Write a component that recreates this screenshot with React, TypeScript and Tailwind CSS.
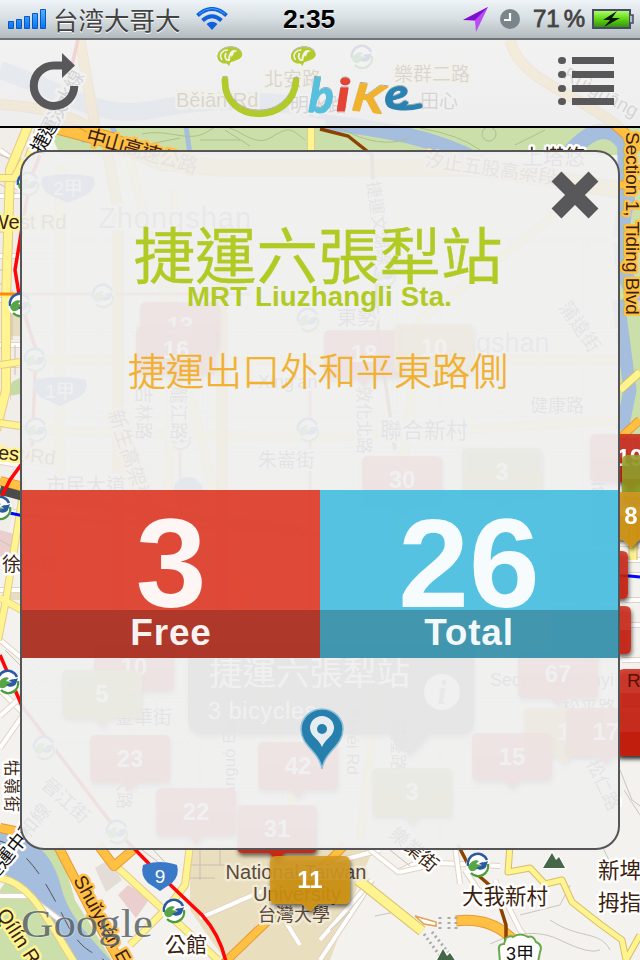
import React from "react";

const SANS = "font-['Liberation_Sans','Noto_Sans_CJK_TC',sans-serif]";

type RoadProps = { d: string; w: number; c: string; edge?: string; ew?: number };

function Road({ d, w, c, edge, ew = 2 }: RoadProps) {
  return (
    <g fill="none" strokeLinejoin="round">
      {edge && <path d={d} stroke={edge} strokeWidth={w + ew} />}
      <path d={d} stroke={c} strokeWidth={w} />
    </g>
  );
}

const minor = "#e2d3c3";
const whiteStreets = [
  "M0 150L22 166", "M0 176L22 190", "M0 196H20", "M10 210V250", "M0 256H60", "M0 300H20", "M8 330V400",
  "M0 345H20", "M0 365H20", "M0 462L60 472", "M0 508L60 525", "M0 640L60 690", "M0 590H40", "M0 690L60 750",
  "M0 716L40 680", "M0 748L30 705", "M200 918L320 866L380 850", "M255 930L275 905L300 945",
  "M320 960L360 900L372 880", "M320 940L372 880", "M370 850L398 872L430 856", "M400 872L440 863L500 866",
  "M455 845L460 884", "M465 870L478 890L495 895", "M495 880L520 930L532 945L532 960", "M560 540L640 545",
  "M620 560H640", "M620 575H640", "M625 600H640", "M625 625H640", "M622 660H640", "M633 440V480", "M0 896L28 896L60 920",
];
const hiddenStreets = [
  "M20 240H620", "M20 330H620", "M100 160V460", "M150 190V640", "M205 210V640", "M250 200V640", "M350 150V840",
  "M395 250V640", "M440 300V840", "M500 300V680", "M540 290V600", "M585 240V600", "M20 415H600", "M20 450H600",
  "M30 700H600", "M60 745H560", "M80 790H520", "M200 640V840", "M280 640V840", "M60 640L220 840", "M110 640L270 840",
];

function Metro({ x, y, r = 11 }: { x: number; y: number; r?: number }) {
  return (
    <g transform={`translate(${x} ${y}) scale(${r / 11})`}>
      <circle r="12" fill="#fff" />
      <path d="M-10 1A10 10 0 0 1 9-5" fill="none" stroke="#2b5aa0" strokeWidth="2.6" />
      <path d="M10-1A10 10 0 0 1-7 8" fill="none" stroke="#4c9b3c" strokeWidth="2.4" />
      <path d="M-10 2C-8-3-3-6 1-4L-2-1 3 0C-1 4-3 6-5 6-8 7-9 4-10 2Z" fill="#58a546" />
      <path d="M10-4C7-2 4-4 1-1L4 0-2 3C1 6 6 5 8 2Z" fill="#2b5aa0" />
    </g>
  );
}

type LabelProps = { x: number; y: number; s?: number; rot?: number; t: string; halo?: string; c?: string; mid?: boolean; ls?: number };

function Label({ x, y, s = 20, rot = 0, t, halo = "#fff", c = "#3c1f10", mid, ls = 0 }: LabelProps) {
  return (
    <text
      transform={`translate(${x} ${y}) rotate(${rot})`}
      fontSize={s}
      fill={c}
      stroke={halo}
      strokeWidth="5"
      strokeLinejoin="round"
      paintOrder="stroke"
      letterSpacing={ls}
      textAnchor={mid ? "middle" : "start"}
    >
      {t}
    </text>
  );
}

const tones = { red: "#c9200f", gold: "#d0920c", green: "#8f991d" };

function Bubble({ x, y, n, tone = "red" }: { x: number; y: number; n: string; tone?: keyof typeof tones }) {
  return (
    <g transform={`translate(${x} ${y})`} filter="url(#drop)">
      <path
        d="M-34-24H34Q40-24 40-18V18Q40 24 34 24H8L0 32L-8 24H-34Q-40 24-40 18V-18Q-40-24-34-24Z"
        fill={tones[tone]}
        fillOpacity="0.86"
      />
      <path d="M-34-24H34Q40-24 40-18V0H-40V-18Q-40-24-34-24Z" fill="#fff" fillOpacity="0.06" />
      <text y="8" textAnchor="middle" fontSize="24" fontWeight="bold" fill="#fff">
        {n}
      </text>
    </g>
  );
}

function Shield({ x, y, t, w = 1 }: { x: number; y: number; t: string; w?: number }) {
  return (
    <g transform={`translate(${x} ${y})`}>
      <path transform={`scale(${w} 1)`} d="M-14-13Q0-17 14-13L17-12Q20-2 12 6L0 14L-12 6Q-20-2-17-12Z" fill="#3a78c8" />
      <text y="6" textAnchor="middle" fontSize="19" fill="#fff">{t}</text>
    </g>
  );
}

function MapCanvas() {
  return (
    <svg className={`absolute inset-0 h-[960px] w-[640px] ${SANS}`} viewBox="0 0 640 960">
      <defs>
        <filter id="drop" x="-20%" y="-20%" width="150%" height="160%">
          <feDropShadow dx="1" dy="3" stdDeviation="2" floodOpacity="0.65" />
        </filter>
      </defs>
      <rect width="640" height="960" fill="#f3f2ee" />
      {/* parks, campus and built-up blocks */}
      <path d="M50 132L120 126H640V155H60Z" fill="#cbdfaa" />
      <path d="M0 126H45L22 200V480L0 560Z" fill="#f1ede8" />
      <path d="M30 845L60 850L75 900L112 960H0V890Z" fill="#cbdfaa" />
      <path d="M190 845H375L360 880L330 960H225L190 910Z" fill="#e9dfbf" />
      <path d="M0 530L18 535L10 560L0 556Z" fill="#ebcfcf" />
      <path d="M95 868L108 860L122 880L106 892Z" fill="#e4dcd6" />
      <path d="M118 895L128 885L150 898L136 918Z" fill="#ebcfcf" />
      <path d="M8 312H20V336H8ZM8 590H22V600H6Z" fill="#e6dcc0" />
      <path d="M12 382L20 378V394L8 396Z" fill="#c5dba5" />
      <path d="M618 126H640V440H618Z" fill="#cbdfaa" />
      {/* waterways */}
      <path d="M0 70C60 90 100 120 150 110S260 95 330 112" fill="none" stroke="#a5bedd" strokeWidth="18" />
      <path d="M325 122C390 130 435 138 480 162M565 158C590 128 610 122 625 145L627 200C616 240 620 280 640 300" fill="none" stroke="#a5bedd" strokeWidth="16" />
      <path d="M186 126L190 155M75 126L85 142M112 126L122 150" stroke="#a5bedd" strokeWidth="5" />
      <path d="M618 300L630 390L622 430" fill="none" stroke="#a5bedd" strokeWidth="13" />
      <path d="M0 832L26 838C45 850 55 862 62 890C70 920 98 945 112 962H72C50 930 35 905 24 885L0 872Z" fill="#a5bedd" />
      <path d="M0 841C30 850 50 890 65 920S90 950 104 960" fill="none" stroke="#555" strokeDasharray="20 12" />
      <path d="M142 134C170 128 190 145 210 130S250 150 270 138S290 128 305 140M150 144L180 138M200 140H240M225 130L250 146M340 128Q380 150 410 138M482 134a7 7 0 1 0 14 0a7 7 0 1 0-14 0M515 145L545 130M420 128Q460 135 480 150" fill="none" stroke="#aebf8e" />
      {/* local street grid */}
      {hiddenStreets.map((d) => <Road key={d} d={d} w={3} c="#fff" edge={minor} />)}
      {whiteStreets.map((d) => <Road key={d} d={d} w={4} c="#fff" edge={minor} ew={2} />)}
      <path d="M0 155L15 160M0 184L16 194M0 215H7M0 232H8M0 270H7M0 284H7M12 290V340M15 345V375M0 540L14 548M0 565L14 570M5 650L20 665M635 450V485M638 510V550M190 865H225M190 878H215M200 845V880M220 845V866M142 850L158 862M150 846L170 868M390 850L410 866M420 846V862" fill="none" stroke="#c9bfb2" />
      <path d="M600 842L610 862L625 870M620 770L632 800L640 806M624 790L640 815M490 944Q530 925 560 940T600 950M550 920C580 940 600 930 610 950M520 915L560 905L570 885M350 912L330 930M375 916L395 912" fill="none" stroke="#cbc5bc" />
      {/* yellow arterials */}
      <Road d="M28 126L10 170L6 300V390L-4 430" w={8} c="#fff48f" edge="#e3cc88" />
      <Road d="M0 178H14L24 160M0 423L20 426M0 365L20 362M22 500L6 600L-2 640M0 598L22 610" w={6} c="#fff48f" edge="#e3cc88" />
      <Road d="M311 126V152M40 126L28 158" w={6} c="#fff48f" edge="#e3cc88" />
      <Road d="M620 390L640 372M633 500V560" w={7} c="#fff48f" edge="#d9bd68" />
      <Road d="M0 878C30 884 42 910 74 962M118 868L218 960M130 945L170 905L185 885L190 845" w={6} c="#fff48f" edge="#e3cc88" />
      <Road d="M358 880L422 931" w={9} c="#fff48f" edge="#d9bd68" />
      <Road d="M510 845L508 872L530 868L545 884L562 880L572 902L600 924L622 940L626 960L640 935" w={5} c="#fff48f" edge="#d9bd68" />
      <Road d="M60 165V640M175 190L165 640M20 360H620M20 430L320 438L620 420M130 160L300 830M600 180L420 320L360 840M20 640H600" w={7} c="#fff48f" edge="#e3cc88" />
      {/* orange highways */}
      <Road d="M50 124L110 140L160 162L220 168H480L620 190" w={15} c="#ffc043" edge="#e59a35" />
      <Road d="M0 104C40 108 70 112 100 135M80 40L95 126M510 40C522 90 600 95 640 150" w={9} c="#ffc043" edge="#e59a35" />
      <Road d="M108 155L118 210V640M222 230V640" w={9} c="#ffc043" edge="#e59a35" />
      <Road d="M0 481L24 487M0 828L24 833M58 846L95 918L120 962M98 845L114 866L135 848" w={8} c="#ffc043" edge="#e59a35" />
      <Road d="M222 965L300 890L345 845" w={7} c="#ffc043" edge="#e59a35" />
      <Road d="M456 921C480 918 500 925 515 942" w={9} c="#ffc043" edge="#e59a35" />
      <Road d="M618 185H640M620 438L640 420" w={7} c="#ffc043" edge="#e59a35" />
      <path d="M0 294H20" stroke="#ff8a00" strokeWidth="3" />
      <path d="M415 916L436 922V926L424 924Z" fill="#fff" stroke="#e0a050" strokeWidth="1.5" />
      <path d="M440 917V931M449 917V931M456 917V931M424 934L440 956M432 932L448 952" stroke="#aaa" strokeWidth="3" strokeDasharray="2 3" />
      {/* rail and metro lines */}
      <path d="M0 490L22 496L300 530" stroke="#4b4b4b" strokeWidth="9" fill="none" />
      <path d="M0 511L24 516L320 535M620 575L640 577" stroke="#0008ff" strokeWidth="3" fill="none" />
      <g fill="none" stroke="#ff0505" strokeWidth="3.5">
        <path d="M78 40L66 90L30 180L15 270L20 300L36 350L32 450L10 480L0 500" />
        <path d="M0 655L22 706L118 832L160 875L202 915Q220 935 226 962" />
      </g>
      <path d="M320 129L348 136L372 155L378 330L395 450M458 845L470 868L495 890L506 925V945" fill="none" stroke="#8c4300" strokeWidth="3.5" />
      <path d="M22 294H250M310 360V640M180 440V640" fill="none" stroke="#d88c6c" strokeWidth="3" />
      <path d="M66 90L34 152" stroke="#dcdcdc" strokeWidth="14" />
      {[[28,184],[20,305],[103,296],[35,360],[36,430],[180,438],[308,430],[308,320],[385,275],[0,508],[8,682],[44,748],[117,832],[362,57]].map(([x, y]) => <Metro key={`${x}-${y}`} x={x} y={y} />)}
      <Metro x={174} y={911} /><Metro x={478} y={865} />
      <circle cx="188" cy="492" r="15" fill="#3d6db5" />
      <Shield x={68} y={189} t="2甲" w={1.5} /><Shield x={60} y={392} t="1甲" w={1.5} /><Shield x={160} y={877} t="9" />
      {/* place names */}
      <Label x={85} y={142} rot={16} t="中山高速公路" s={20} halo="#ffc043" ls={-1} />
      <Label x={42} y={155} rot={-62} t="捷運淡水線" s={19} c="#111" ls={-1} />
      <Label x={176} y={107} t="Běiān Rd" s={20} halo="#fff7b8" />
      <Label x={264} y={86} t="北安路" halo="#fff7b8" s={19} /><Label x={290} y={112} t="明水路" s={19} />
      <Label x={394} y={81} t="樂群二路" halo="#fff7b8" s={19} /><Label x={420} y={108} t="田心" s={19} />
      <Label x={562} y={78} rot={29} t="Ruìguāng Rd" s={19} />
      <Label x={424} y={166} rot={8} t="汐止五股高架段" s={19} halo="#ffe0a0" />
      <Label x={522} y={164} t="上塔悠" s={21} />
      <Label x={367} y={182} rot={82} t="捷運文湖線" s={17} />
      <Label x={98} y={228} t="Zhongshan" s={29} c="#777" ls={1} />
      <Label x={428} y={352} t="Songshan" s={27} c="#777" />
      <Label x={-10} y={229} t="West Rd" s={20} halo="#fff48f" /><Label x={-21} y={457} rot={6} t="West Rd" s={20} halo="#fff48f" />
      <Label x={337} y={325} t="東勢" /><Label x={380} y={438} t="聯合新村" s={22} />
      <Label x={258} y={467} t="朱崙街" s={19} /><Label x={530} y={412} t="健康路" s={18} />
      <Label x={258} y={388} t="Xing'an" s={18} /><Label x={558} y={307} rot={55} t="蒲遠街" s={19} />
      <Label x={46} y={493} t="市民大道" /><Label x={108} y={412} rot={72} t="新生高架道路" halo="#ffe0a0" />
      <Label x={137} y={386} rot={90} t="吉林路" s={18} /><Label x={172} y={386} rot={90} t="龍江路" s={18} />
      <Label x={358} y={386} rot={90} t="敦化北路" s={17} />
      <Label x={2} y={571} t="徐州路" s={19} /><Label x={115} y={724} t="金華街" s={19} />
      <Label x={6} y={760} rot={90} t="牯嶺街" s={16} ls={2} />
      <Label x={-8} y={884} rot={-51} t="捷運中和線" s={19} c="#111" />
      <Label x={40} y={786} rot={42} t="晉江街" s={19} /><Label x={118} y={758} rot={90} t="師大路" s={17} />
      <Label x={235} y={808} rot={-90} t="Jianguó Elev" s={17} /><Label x={347} y={708} rot={90} t="Siwéi Rd" s={17} />
      <Label x={392} y={720} rot={90} t="基隆路" s={17} /><Label x={586} y={763} rot={65} t="松仁路" s={18} />
      <Label x={388} y={836} rot={40} t="樂業街" s={19} />
      <Label x={490} y={686} t="Section 5, Xinyi" s={18} />
      <Label x={562} y={714} t="松平路" s={18} />
      <Label x={604} y={498} rot={-90} t="Blvd" s={18} />
      <Label x={626} y={132} rot={90} t="Section 1, Tiding Blvd" s={19} halo="#ffc043" />
      <Label x={73} y={880} rot={61} t="Shuǐyuán Expy" s={19} halo="#ffc043" />
      <Label x={-4} y={914} rot={57} t="Qílín Rd" s={20} halo="#fff48f" />
      <Label x={296} y={879} t="National Taiwan" mid s={20} c="#5a483c" halo="#f1ead4" /><Label x={297} y={901} t="University" mid s={20} c="#5a483c" halo="#f1ead4" />
      <Label x={294} y={921} t="台灣大學" mid s={18} c="#5a483c" halo="#f1ead4" />
      <Label x={165} y={952} t="公館" s={21} /><Label x={462} y={904} t="大我新村" s={21.5} />
      <Label x={598} y={878} t="新埤" s={21.5} /><Label x={598} y={910} t="拇指山" s={21.5} />
      {/* peaks */}
      <g fill="#476848" stroke="#fff" strokeWidth="2" paintOrder="stroke">
        <path d="M543 868L552 853L556 860L559 857L565 868Z" />
        <path d="M436 962L443 949L447 956L450 953L456 962Z" />
      </g>
      <path d="M506 938Q511 935 513 937Q520 932 528 937Q533 935 536 942Q543 945 540 952L538 962H500L499 950Q498 944 504 944Z" fill="#fff" stroke="#68a94b" strokeWidth="2" />
      <Label x={520} y={960} t="3甲" mid s={18} c="#111" />
      {/* station bubbles */}
      <Bubble x={180} y={326} n="13" /><Bubble x={176} y={350} n="16" /><Bubble x={364} y={354} n="18" /><Bubble x={434} y={348} n="10" tone="gold" />
      <Bubble x={402} y={480} n="30" /><Bubble x={502} y={472} n="3" tone="green" />
      <Bubble x={630} y={458} n="19" /><Bubble x={662} y={479} n="" tone="green" /><Bubble x={631} y={516} n="8" tone="gold" />
      <Bubble x={588} y={575} n="" /><Bubble x={591} y={630} n="" />
      <Bubble x={658} y={693} n="" /><Bubble x={658} y={731} n="" />
      <text x="627" y="687" fontSize="19" fill="#5c0f05">Rd</text>
      <Bubble x={134} y={667} n="10" /><Bubble x={102} y={694} n="5" tone="green" /><Bubble x={130} y={759} n="23" />
      <Bubble x={298} y={766} n="42" /><Bubble x={196} y={812} n="22" /><Bubble x={277} y={829} n="31" /><Bubble x={310} y={880} n="11" tone="gold" />
      <Bubble x={412} y={792} n="3" tone="green" /><Bubble x={558} y={674} n="67" /><Bubble x={564} y={732} n="1" tone="gold" />
      <Bubble x={606} y={732} n="17" /><Bubble x={512} y={757} n="15" />
      {/* station callout */}
      <path d="M202 642H460Q474 642 474 656V720Q474 734 460 734H430L410 756L388 734H202Q188 734 188 720V656Q188 642 202 642Z" fill="#444" fillOpacity="0.8" filter="url(#drop)" />
      <text x="209" y="685" fontSize="33.5" fill="#fff">捷運六張犁站</text>
      <text x="208" y="719" fontSize="23" letterSpacing="0.8" fill="#fff">3 bicycles</text>
      <circle cx="442" cy="692" r="18" fill="#fff" />
      <text x="442" y="704" textAnchor="middle" fontSize="34" fontStyle="italic" fontWeight="bold" fill="#777" className="font-['Liberation_Serif',serif]">i</text>
      <text x="21" y="937" fontSize="41" textLength="132" lengthAdjust="spacingAndGlyphs" fill="#4e585e" fillOpacity="0.8" stroke="#fff" strokeOpacity="0.35" strokeWidth="1.5" paintOrder="stroke" className="font-['Liberation_Serif',serif]">Google</text>
    </svg>
  );
}

function StatusBar() {
  return (
    <div className="flex h-10 shrink-0 items-center border-b-2 border-[#6d7478] bg-linear-to-b from-[#eef4f8] via-[#d7dee2] to-[#b4bbbf] [text-shadow:0_1px_0_#fff]">
      <svg className="ml-2 h-[22px] w-[39px] shrink-0" viewBox="0 0 39 22">
        <defs>
          <linearGradient id="blue" x2="0" y2="1">
            <stop stopColor="#53b5ff" /><stop offset="1" stopColor="#0873ea" />
          </linearGradient>
        </defs>
        <g fill="url(#blue)" stroke="#0b55c4">
          <path d="M.5 13.5h5v7h-5zM8.500 11.500h5v9h-5zM16.500 8.500h5v12h-5zM24.500 5.500h5v15h-5zM32.500 1.500h5v19h-5z" />
        </g>
      </svg>
      <span className="ml-[6px] w-[139px] whitespace-nowrap font-['Noto_Sans_CJK_SC',sans-serif] text-[25.5px] leading-[38px] text-[#434343]">台湾大哥大</span>
      <svg className="ml-[4px] h-6 w-8 shrink-0" viewBox="0 0 32 24">
        <g fill="none" stroke="#0e61dc" strokeWidth="4">
          <path d="M1.500 8.500Q16-4.500 30.500 8.500" /><path d="M6.500 13.500Q16 5 25.500 13.500" />
        </g>
        <path d="M10.500 17Q16 12.500 21.500 17L16 23Z" fill="#0e61dc" />
        <path d="M3 7Q16-4 29 7" fill="none" stroke="#45a4ff" strokeWidth="1" />
      </svg>
      <span className="ml-[55px] w-[56px] whitespace-nowrap font-['Liberation_Sans',sans-serif] text-[26.5px] font-bold leading-[38px] tracking-[-0.3px] text-black">2:35</span>
      <svg className="ml-[124px] h-[26px] w-[26px] shrink-0" viewBox="0 0 26 26">
        <path d="M25 1L0 14L12 15L13 26Z" fill="#b94cf5" /><path d="M25 1L0 14L12 14Z" fill="#7c10cd" />
      </svg>
      <svg className="ml-[11px] h-5 w-5 shrink-0" viewBox="0 0 20 20">
        <circle cx="10" cy="10" r="10" fill="#79858a" /><path d="M10 4V11H4" fill="none" stroke="#fff" strokeWidth="2.200" />
      </svg>
      <span className="ml-[13px] w-[53px] whitespace-nowrap font-['Liberation_Sans',sans-serif] text-[24px] leading-10 text-[#434343] [-webkit-text-stroke:0.8px_#434343]">71<span className="ml-[4px]">%</span></span>
      <svg className="ml-[6px] h-[22px] w-[42px] shrink-0" viewBox="0 0 42 22">
        <defs>
          <linearGradient id="cell" x2="0" y2="1"><stop stopColor="#b6ff75" /><stop offset=".45" stopColor="#67dc19" /><stop offset="1" stopColor="#2c8d08" /></linearGradient>
        </defs>
        <rect x="1" y="2" width="37" height="18" fill="url(#cell)" stroke="#484a6a" strokeWidth="2" />
        <path d="M38 7h3v8h-3" fill="#b7bdc8" stroke="#484a6a" strokeWidth="1.500" />
        <path d="M25 3L11 12H18L12 19L28 10H20Z" fill="#071607" />
      </svg>
    </div>
  );
}

function UbikeLogo() {
  return (
    <svg className="h-[80px] w-[220px] shrink-0" viewBox="210 40 220 80">
      <defs>
        <filter id="soft" x="-5%" y="-5%" width="112%" height="115%"><feDropShadow dx="0" dy="-1" stdDeviation=".5" floodOpacity=".3" /></filter>
      </defs>
      <g filter="url(#soft)">
        <path d="M225 80C223 125 293 125 296 81" fill="none" stroke="#b2ca2c" strokeWidth="6.500" strokeLinecap="round" />
        {[0, 73.500].map((dx) => (
          <g key={dx} transform={`translate(${dx} 0)`}>
            <path d="M242 54C240 45 222 45 218 54C215 62 225 66 231 62C239 60 243 57 242 54Z" fill="#b2ca2c" />
            <path d="M222 60C218 54 223 50 228 50" fill="none" stroke="#f3f3ee" strokeWidth="1.500" />
            <path d="M226 53C224 57 226 61 229 60C229 54 232 50 235 51C232 52 233 55 231 56" fill="none" stroke="#f3f3ee" strokeWidth="1.800" />
            <path d="M225 61L229 66L231 61Z" fill="#b2ca2c" />
          </g>
        ))}
        <g fontWeight="bold" fontStyle="italic" strokeWidth="1" strokeLinejoin="round" className="font-['Lato',sans-serif]">
          <text transform="translate(308 112) rotate(3)" fontSize="47" textLength="25" lengthAdjust="spacingAndGlyphs" fill="#56c0de" stroke="#56c0de">b</text>
          <text transform="translate(336 111)" fontSize="44" textLength="14" lengthAdjust="spacingAndGlyphs" fill="#e44435" stroke="#e44435">i</text>
          <text transform="translate(351 110) rotate(7)" fontSize="38" textLength="32" lengthAdjust="spacingAndGlyphs" fill="#f1b22e" stroke="#f1b22e">K</text>
          <text transform="translate(386 110) rotate(-8)" fontSize="41" textLength="25" lengthAdjust="spacingAndGlyphs" fill="#2b82b1" stroke="#2b82b1">e</text>
        </g>
        <path d="M397 107.500Q409 109 420 106" fill="none" stroke="#2b82b1" strokeWidth="5" strokeLinecap="round" />
      </g>
    </svg>
  );
}

function Header() {
  return (
    <header className="flex h-[88px] shrink-0 items-start border-b-2 border-black bg-linear-to-b from-[#f2f2f2]/87 to-[#ededee]/87">
      <svg className="ml-[29px] mt-[13px] h-[58px] w-[50px] shrink-0" viewBox="0 0 50 58">
        <path d="M35 12.500H25A20.250 20.250 0 1 0 45.250 33" fill="none" stroke="#58585a" strokeWidth="8" />
        <path d="M33 0L46 12.500L33 25Z" fill="#58585a" />
      </svg>
      <div className="ml-[131px]"><UbikeLogo /></div>
      <ul className="ml-[128px] mt-[17px] flex flex-col gap-[6.800px]">
        {[0, 1, 2, 3].map((row) => (
          <li key={row} className="flex items-center gap-[6px]">
            <span className="h-[7px] w-2 rounded-full bg-[#58585a]" />
            <span className="h-[7px] w-[42px] bg-[#58585a]" />
          </li>
        ))}
      </ul>
    </header>
  );
}

function Stat({ value, label, tone }: { value: string; label: string; tone: string }) {
  return (
    <div className={`flex h-[168px] flex-1 flex-col text-center font-bold text-white/95 ${tone}`}>
      <div className="h-[120px] text-[127px] leading-[146px]">{value}</div>
      <div className="h-12 bg-black/22 text-[37px] leading-[45px] tracking-[0.8px]">{label}</div>
    </div>
  );
}

function StationCard() {
  return (
    <section className="mx-5 mt-[22px] flex h-[700px] shrink-0 flex-col overflow-hidden rounded-[24px] border-2 border-[#555558] bg-[#efefef]/94">
      <div className="flex h-[64px] justify-end pr-[19px] pt-[19px]">
        <svg className="h-12 w-12" viewBox="0 0 48 48">
          <path d="M5.500 5.500L42.500 42.500M42.500 5.500L5.500 42.500" stroke="#58585a" strokeWidth="14" />
        </svg>
      </div>
      <h1 className="h-[66px] whitespace-nowrap pr-[4px] pt-[4px] text-center font-['Noto_Sans_CJK_TC',sans-serif] text-[61.500px] leading-[66px] text-[#b2ca24] [-webkit-text-stroke:0.3px_#b2ca24]">捷運六張犁站</h1>
      <h2 className="h-[30px] pr-px text-center text-[27.500px] font-bold leading-[30px] tracking-[0.2px] text-[#b2ca24]">MRT Liuzhangli Sta.</h2>
      <p className="h-[178px] pr-[4px] pt-[32px] text-center font-['Noto_Sans_CJK_TC',sans-serif] text-[38px] font-light leading-[50px] text-[#f1b02e] [-webkit-text-stroke:0.5px_#f1b02e]">捷運出口外和平東路側</p>
      <div className="flex">
        <Stat value="3" label="Free" tone="bg-[#dd3f2c]/95" />
        <Stat value="26" label="Total" tone="bg-[#4cbfdf]/95" />
      </div>
      <div className="flex justify-center pt-[50px]">
        <svg className="ml-[3px] h-[64px] w-[48px]" viewBox="0 0 48 64">
          <path d="M24 61C21 43 3 38 3 21A21 20 0 0 1 45 21C45 38 27 43 24 61Z" fill="#277fae" stroke="#8ec0d8" strokeWidth="1.500" />
          <path d="M24 39C21 31 12 28 12 20A12 12 0 0 1 36 20C36 28 27 31 24 39Z" fill="#e5edf1" />
          <circle cx="24" cy="21" r="5" fill="#277fae" />
        </svg>
      </div>
    </section>
  );
}

export default function App() {
  return (
    <main className={`relative h-[960px] w-[640px] overflow-hidden ${SANS}`}>
      <MapCanvas />
      <div className="relative flex h-full flex-col">
        <StatusBar />
        <Header />
        <StationCard />
      </div>
    </main>
  );
}
